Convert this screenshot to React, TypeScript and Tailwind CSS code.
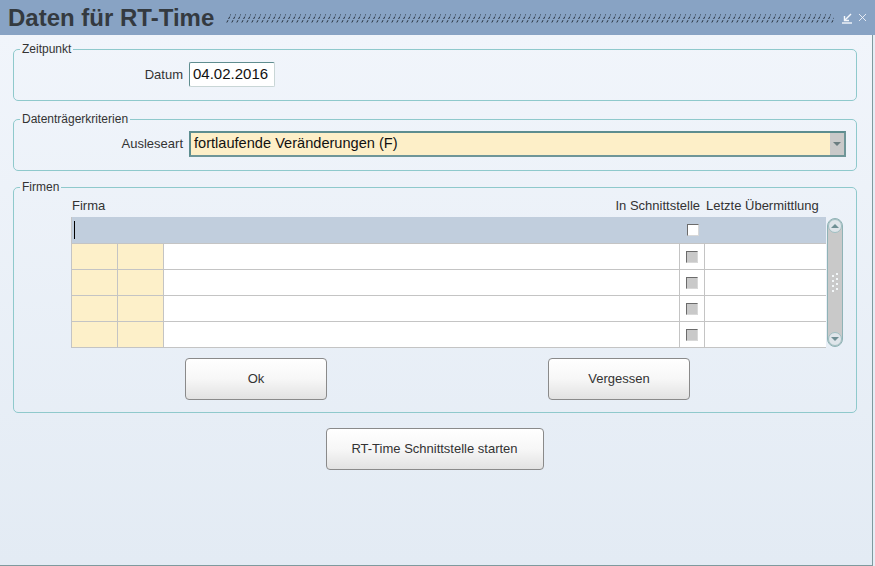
import { X } from "lucide-react";

const font = { fontFamily: '"Liberation Sans", Arial, sans-serif' };

function Hatch() {
  return (
    <svg className="h-[10px] flex-1" preserveAspectRatio="none">
      <defs>
        <pattern id="hatch" width="5" height="10" patternUnits="userSpaceOnUse">
          <path d="M0.8 9.5 L2 7.2 M2.6 6 L3.8 3.6 M4.4 2.4 L5 1.2" stroke="#27313d" strokeWidth="1" />
        </pattern>
      </defs>
      <rect width="100%" height="100%" fill="url(#hatch)" />
    </svg>
  );
}

function DockIcon() {
  return (
    <svg width="12" height="12" viewBox="0 0 12 12" fill="none" stroke="#f4f7fb" strokeWidth="1.4">
      <path d="M10 2 L4 8" />
      <path d="M3.5 4 V8.5 H8" />
      <path d="M1 11 H11" />
    </svg>
  );
}

function Check({ header }: { header?: boolean }) {
  return (
    <div
      className={`w-[12px] h-[12px] border border-t-[#6b6b6b] border-l-[#6b6b6b] border-r-[#d8d8d8] border-b-[#d8d8d8] ${
        header ? "bg-white" : "bg-[#c9c9c9]"
      }`}
    />
  );
}

function Btn({ label, w }: { label: string; w: string }) {
  return (
    <button
      className={`${w} h-[42px] rounded-[4px] border border-[#8a8a8a] bg-gradient-to-b from-white via-[#f7f7f7] to-[#e2e2e2] text-[13px] text-[#333]`}
    >
      {label}
    </button>
  );
}

function Row({ first }: { first?: boolean }) {
  const cell = "h-full border-r border-[#c4c4c4]";
  if (first) {
    return (
      <div className="flex h-[26px] bg-[#c1cedd]">
        <div className="w-[46px] h-full flex items-center pl-[2px]">
          <div className="w-[1px] h-[18px] bg-black" />
        </div>
        <div className="w-[46px] h-full" />
        <div className="w-[517px] h-full" />
        <div className="w-[25px] h-full flex items-center justify-center">
          <Check header />
        </div>
        <div className="w-[121px] h-full" />
      </div>
    );
  }
  return (
    <div className="flex h-[26px] border-t border-[#c4c4c4] bg-white">
      <div className={`w-[46px] bg-[#fdf0c9] ${cell}`} />
      <div className={`w-[46px] bg-[#fdf0c9] ${cell}`} />
      <div className={`w-[517px] ${cell}`} />
      <div className={`w-[25px] ${cell} flex items-center justify-center`}>
        <Check />
      </div>
      <div className="w-[121px] h-full" />
    </div>
  );
}

function Scrollbar() {
  return (
    <div className="ml-[1px] w-[16px] h-[129px] mt-[1px] rounded-[8px] border border-[#8fb3b6] bg-[#c9c9c9] flex flex-col items-center justify-between">
      <div className="w-[14px] h-[14px] rounded-full bg-[#dfe5ea] border border-[#9fbfc2] flex items-center justify-center">
        <div className="w-0 h-0 border-l-[4px] border-r-[4px] border-b-[4px] border-l-transparent border-r-transparent border-b-[#6f8f94]" />
      </div>
      <svg width="8" height="20" viewBox="0 0 8 20">
        {[2, 7, 12, 17].map((y) => (
          <g key={y} fill="#f2f6f8">
            <rect x="1" y={y} width="2" height="2" />
            <rect x="5" y={y - 2} width="2" height="2" />
          </g>
        ))}
      </svg>
      <div className="w-[14px] h-[14px] rounded-full bg-[#dfe5ea] border border-[#9fbfc2] flex items-center justify-center">
        <div className="w-0 h-0 border-l-[4px] border-r-[4px] border-t-[4px] border-l-transparent border-r-transparent border-t-[#6f8f94]" />
      </div>
    </div>
  );
}

export default function App() {
  return (
    <div className="w-[875px] h-[566px] flex flex-col bg-[#e6edf5] overflow-hidden" style={font}>
      {/* Titelleiste */}
      <div className="h-[35px] shrink-0 bg-[#88a3c4] flex items-center pl-[8px] pr-[6px]">
        <span className="text-[24px] font-bold text-[#343a40] leading-none">Daten für RT-Time</span>
        <div className="flex-1 flex ml-[12px] mr-[7px] pt-[1px]">
          <Hatch />
        </div>
        <div className="flex items-center gap-[3px]">
          <DockIcon />
          <X size={13} color="#f4f7fb" strokeWidth={1.6} />
        </div>
      </div>

      {/* Inhalt */}
      <div className="flex-1 mr-[2px] border-r border-b border-[#7f9a9e] bg-gradient-to-b from-[#f1f5fb] to-[#e3ebf4] pl-[13px] pr-[15px] pt-[7px] text-[#333]">
        {/* Zeitpunkt */}
        <fieldset className="border border-[#8fc9cc] rounded-[5px] pb-[13px]">
          <legend className="ml-[6px] px-[2px] text-[12px] leading-[14px] text-[#333]">Zeitpunkt</legend>
          <div className="flex items-center pt-[6px]">
            <span className="w-[175px] pr-[6px] text-right text-[13px]">Datum</span>
            <div className="w-[86px] h-[25px] bg-white border border-[#5f8d8f] border-r-[#c9d6d6] border-b-[#c9d6d6] rounded-[2px] flex items-center pl-[3px] text-[15px] text-[#111]">
              04.02.2016
            </div>
          </div>
        </fieldset>

        {/* Datenträgerkriterien */}
        <fieldset className="mt-[11px] border border-[#8fc9cc] rounded-[5px] pb-[13px]">
          <legend className="ml-[6px] px-[2px] text-[12px] leading-[14px] text-[#333]">Datenträgerkriterien</legend>
          <div className="flex items-center pt-[5px]">
            <span className="w-[175px] pr-[6px] text-right text-[13px]">Ausleseart</span>
            <div className="w-[657px] h-[26px] bg-[#fdefc8] border-[2px] border-[#5d8d8f] border-r-[#6f9698] border-b-[#6f9698] flex items-center">
              <span className="flex-1 pl-[3px] text-[14.6px] text-[#111]">fortlaufende Veränderungen (F)</span>
              <div className="w-[14px] h-full bg-[#c9c9c9] flex items-center justify-center">
                <div className="w-0 h-0 border-l-[4px] border-r-[4px] border-t-[4px] border-l-transparent border-r-transparent border-t-[#6b7d80]" />
              </div>
            </div>
          </div>
        </fieldset>

        {/* Firmen */}
        <fieldset className="mt-[9px] border border-[#8fc9cc] rounded-[5px] pb-[12px]">
          <legend className="ml-[6px] px-[2px] text-[12px] leading-[14px] text-[#333]">Firmen</legend>
          <div className="ml-[57px] w-[772px]">
            <div className="flex h-[23px] items-center text-[13px] text-[#333]">
              <span className="pl-[1px]">Firma</span>
              <span className="ml-auto w-[93px] text-right pr-[6px]">In Schnittstelle</span>
              <span className="w-[137px]">Letzte Übermittlung</span>
            </div>
            <div className="flex">
              <div className="w-[755px] border-l border-b border-[#c4c4c4]">
                <Row first />
                <Row />
                <Row />
                <Row />
                <Row />
              </div>
              <Scrollbar />
            </div>
          </div>
          <div className="flex mt-[10px] pl-[171px]">
            <Btn label="Ok" w="w-[142px]" />
            <div className="w-[221px]" />
            <Btn label="Vergessen" w="w-[142px]" />
          </div>
        </fieldset>

        <div className="flex justify-center mt-[15px] pr-[1px]">
          <Btn label="RT-Time Schnittstelle starten" w="w-[218px]" />
        </div>
      </div>
    </div>
  );
}
